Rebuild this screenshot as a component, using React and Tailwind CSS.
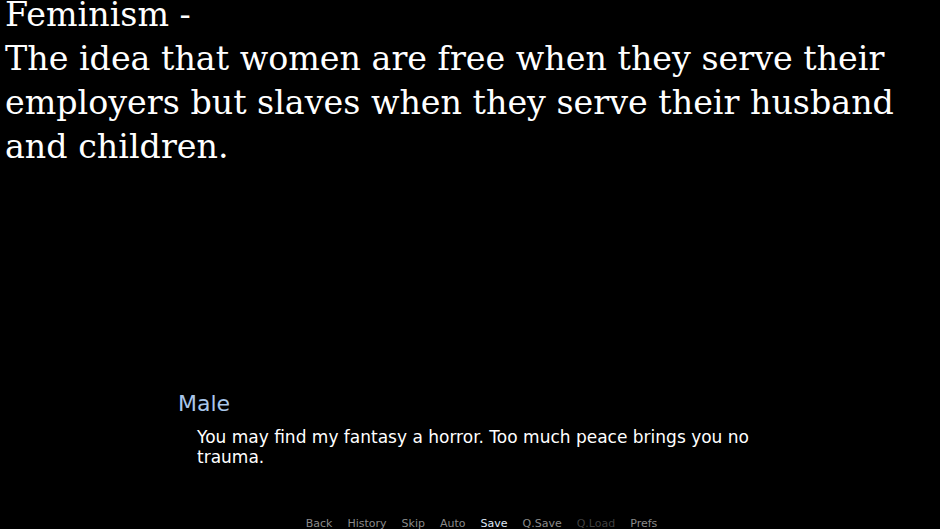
export default function App() {
  const menu = [
    { label: "Back", cls: "text-[#8a8a8a]" },
    { label: "History", cls: "text-[#8a8a8a]" },
    { label: "Skip", cls: "text-[#8a8a8a]" },
    { label: "Auto", cls: "text-[#8a8a8a]" },
    { label: "Save", cls: "text-[#dfe8f5]" },
    { label: "Q.Save", cls: "text-[#8a8a8a]" },
    { label: "Q.Load", cls: "text-[#3f3f3f]" },
    { label: "Prefs", cls: "text-[#8a8a8a]" },
  ];

  return (
    <div className="w-[940px] h-[529px] bg-black overflow-hidden flex flex-col">
      {/* centered text */}
      <div className="px-[5px] -mt-[7px] text-white text-[33.3px] leading-[44px] font-['DejaVu_Serif',serif]">
        <p>Feminism -</p>
        <p>
          The idea that women are free when they serve their employers but
          slaves when they serve their husband and children.
        </p>
      </div>

      {/* dialogue */}
      <div className="mt-auto pl-[178px] font-['DejaVu_Sans',sans-serif]">
        <div className="text-[#a9c6ea] text-[22px] leading-[28px]">Male</div>
        <div className="pl-[19px] pt-[9px] w-[620px] text-white text-[17px] leading-[20px]">
          You may find my fantasy a horror. Too much peace brings you no
          trauma.
        </div>
      </div>

      {/* quick menu */}
      <div className="mt-[50px] -mb-[2px] h-[14px] shrink-0 flex justify-center gap-[15px] pl-[23px] text-[11px] leading-[14px] font-['DejaVu_Sans',sans-serif]">
        {menu.map((m) => (
          <span key={m.label} className={m.cls}>
            {m.label}
          </span>
        ))}
      </div>
    </div>
  );
}
